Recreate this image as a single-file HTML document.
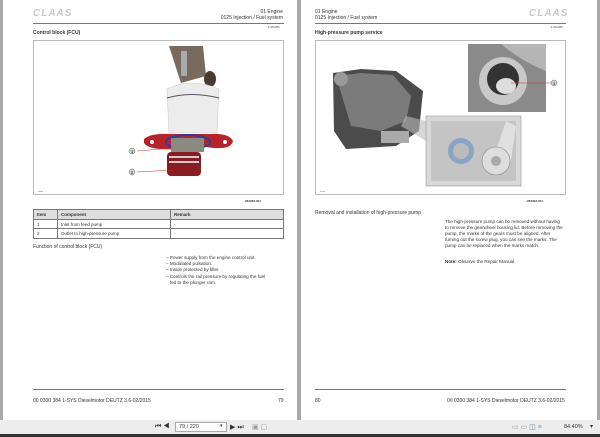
<!DOCTYPE html>
<html><head><meta charset="utf-8"><style>
*{margin:0;padding:0;box-sizing:border-box}
body{width:600px;height:437px;background:#a9a9a9;position:relative;overflow:hidden;font-family:"Liberation Sans",sans-serif;color:#333}
.pg{position:absolute;top:0;height:420px;background:#fff}
.a{position:absolute;white-space:nowrap}
.logo{font-weight:bold;font-style:italic;color:#c8c8c8;font-size:10px;letter-spacing:1px}
.s{font-size:5px}
.t{font-size:5px;font-weight:bold}
.rule{position:absolute;height:1px;background:#777}
table{position:absolute;border-collapse:collapse;font-size:4.5px}
td{border:0.7px solid #777;padding:0 3px;height:9.7px}
tr:first-child td{background:#ddd;font-weight:bold}
.tb{position:absolute;left:0;top:420px;width:600px;height:14px;background:#ededed}
.dk{position:absolute;left:0;top:434px;width:600px;height:3px;background:#333}
</style></head><body>
<div class="pg" style="left:3px;width:294px"></div>
<div class="pg" style="left:301px;width:296px"></div>

<!-- LEFT PAGE -->
<div class="a logo" style="left:33px;top:8px">CLAAS</div>
<div class="a s" style="right:317px;top:9px;text-align:right;line-height:6px">01 Engine<br>0125 Injection / Fuel system</div>
<div class="rule" style="left:33px;top:23px;width:251px"></div>
<div class="a" style="left:268px;top:25px;font-size:3px">1.05.001</div>
<div class="a t" style="left:33px;top:30px">Control block (FCU)</div>
<div class="a" style="left:33px;top:40px;width:251px;height:155px;border:0.7px solid #bbb">
<svg width="251" height="155" viewBox="33 40 251 155">
<path d="M168 45 L202 45 L205 75 L180 82 Z" fill="#7a6a5e"/>
<rect x="180" y="50" width="6" height="25" fill="#aaa"/>
<ellipse cx="209" cy="78" rx="6" ry="8" fill="#4a3a30"/>
<path d="M166 88 Q190 76 218 88 L216 132 L168 132 Z" fill="#ececec" stroke="#ccc" stroke-width="0.6"/>
<path d="M166 97 Q190 90 218 97" stroke="#556" stroke-width="1" fill="none"/>
<path d="M143 138 Q150 132 168 133 L210 133 Q228 132 232 140 Q230 150 205 146 L180 148 Q148 150 143 142 Z" fill="#b8232a"/>
<ellipse cx="187" cy="141" rx="22" ry="7" fill="none" stroke="#2a3da0" stroke-width="2"/>
<circle cx="151" cy="141" r="2" fill="#fff"/><circle cx="224" cy="141" r="2" fill="#fff"/>
<rect x="170" y="137" width="33" height="14" fill="#8b8a80"/>
<rect x="166" y="151" width="34" height="24" rx="4" fill="#8b1c22"/>
<rect x="168" y="155" width="30" height="2" fill="#ccc"/><rect x="168" y="160" width="30" height="2" fill="#ccc"/>
<line x1="136" y1="150" x2="172" y2="147" stroke="#c33" stroke-width="0.6"/>
<line x1="136" y1="171" x2="172" y2="169" stroke="#c33" stroke-width="0.6"/>
<circle cx="131" cy="150" r="3" fill="#ccc" stroke="#666" stroke-width="0.5"/>
<circle cx="131" cy="171" r="3" fill="#ccc" stroke="#666" stroke-width="0.5"/>
<text x="130" y="152" font-size="4" font-family="Liberation Sans">1</text>
<text x="130" y="173" font-size="4" font-family="Liberation Sans">2</text>
<rect x="37" y="190" width="5" height="0.6" fill="#999"/>
</svg></div>
<div class="a" style="left:245px;top:199px;font-size:3px;font-weight:bold">263383-001</div>
<table style="left:33px;top:209px;width:251px">
<tr><td style="width:24px">Item</td><td style="width:113px">Component</td><td>Remark</td></tr>
<tr><td>1</td><td>Inlet from feed pump</td><td>-</td></tr>
<tr><td>2</td><td>Outlet to high-pressure pump</td><td>-</td></tr>
</table>
<div class="a s" style="left:33px;top:244px">Function of control block (FCU)</div>
<div class="a s" style="left:166px;top:255px;line-height:6.2px;font-size:4.6px">
– Power supply from the engine control unit.<br>– Modulated pulsation.<br>– Inside protected by filter.<br>– Controls the rail pressure by regulating the fuel<br>&nbsp;&nbsp;&nbsp;fed to the plunger ram.</div>
<div class="rule" style="left:33px;top:389px;width:251px"></div>
<div class="a s" style="left:33px;top:398px">00 0300 384 1-SYS Dieselmotor DEUTZ 3.6-02/2015</div>
<div class="a s" style="left:278px;top:398px">79</div>

<!-- RIGHT PAGE -->
<div class="a s" style="left:315px;top:9px;line-height:6px">01 Engine<br>0125 Injection / Fuel system</div>
<div class="a logo" style="left:529px;top:8px">CLAAS</div>
<div class="rule" style="left:315px;top:23px;width:251px"></div>
<div class="a" style="left:551px;top:25px;font-size:3px">1.05.002</div>
<div class="a t" style="left:315px;top:30px">High-pressure pump service</div>
<div class="a" style="left:315px;top:40px;width:251px;height:155px;border:0.7px solid #bbb">
<svg width="251" height="155" viewBox="315 40 251 155">
<rect x="467" y="43" width="78" height="68" fill="#8a8a8a"/>
<path d="M467 43 L545 43 L545 70 Q520 60 500 43 Z" fill="#b5b5b5"/>
<circle cx="502" cy="80" r="24" fill="#c8c8c8"/>
<circle cx="502" cy="78" r="16" fill="#333"/>
<ellipse cx="505" cy="85" rx="10" ry="8" fill="#ddd"/>
<line x1="510" y1="82" x2="550" y2="82" stroke="#c33" stroke-width="0.6"/>
<circle cx="553" cy="82" r="3" fill="#ccc" stroke="#666" stroke-width="0.5"/>
<text x="552" y="84" font-size="4" font-family="Liberation Sans">1</text>
<path d="M332 72 L360 68 L395 70 L422 90 L418 130 L395 145 L345 148 L333 130 Z" fill="#4b4b4b"/>
<path d="M335 75 L360 72 L392 74 L410 95 L405 120 L380 130 L350 125 Z" fill="#7b7b7b"/>
<circle cx="340" cy="78" r="7" fill="#999"/>
<rect x="380" y="130" width="28" height="12" fill="#aaa"/>
<path d="M405 115 L425 120 L425 140 L400 125 Z" fill="#bbb" opacity="0.6"/>
<rect x="425" y="115" width="95" height="70" fill="#d8d8d8" stroke="#888" stroke-width="0.5"/>
<rect x="430" y="120" width="85" height="60" fill="#c4c4c4"/>
<circle cx="460" cy="150" r="13" fill="#8aa4c8"/>
<circle cx="460" cy="150" r="8" fill="#bbb"/>
<path d="M495 150 L505 120 L515 125 L510 160 Z" fill="#e0e0e0"/>
<circle cx="495" cy="160" r="14" fill="#ddd" stroke="#888" stroke-width="0.6"/>
<circle cx="495" cy="160" r="5" fill="#aaa"/>
<rect x="319" y="190" width="5" height="0.6" fill="#999"/>
</svg></div>
<div class="a" style="left:527px;top:199px;font-size:3px;font-weight:bold">263393-001</div>
<div class="a s" style="left:315px;top:210px">Removal and installation of high-pressure pump</div>
<div class="a" style="left:445px;top:219px;font-size:4.6px;line-height:6.1px;white-space:normal;width:118px">The high-pressure pump can be removed without having to remove the gearwheel housing lid. Before removing the pump, the marks of the gears must be aligned. After turning out the screw plug, you can see the marks. The pump can be replaced when the marks match.</div>
<div class="a" style="left:445px;top:259px;font-size:4.6px"><b>Note:</b> Observe the Repair Manual.</div>
<div class="rule" style="left:315px;top:389px;width:251px"></div>
<div class="a s" style="left:315px;top:398px">80</div>
<div class="a s" style="left:447px;top:398px">00 0300 384 1-SYS Dieselmotor DEUTZ 3.6-02/2015</div>

<!-- toolbar -->
<div class="tb"></div>
<div class="a" style="left:155px;top:423px;font-size:7px;color:#333">⏮ ◀</div>
<div class="a" style="left:175px;top:422px;width:52px;height:10px;background:#fff;border:0.7px solid #aaa;font-size:5.5px;padding:1px 3px">79 / 220</div>
<div class="a" style="left:220px;top:423px;font-size:5px">▾</div>
<div class="a" style="left:230px;top:423px;font-size:7px;color:#333">▶ ⏭</div>
<div class="a" style="left:252px;top:423px;font-size:7px;color:#999">▣ ▢</div>
<div class="a" style="left:512px;top:423px;font-size:7px;color:#999">▭ ▭ <span style="color:#58a">◫</span> ≡</div>
<div class="a" style="left:564px;top:424px;font-size:5.5px">84.40%</div>
<div class="a" style="left:590px;top:423px;font-size:6px">▾</div>
<div class="dk"></div>
</body></html>
